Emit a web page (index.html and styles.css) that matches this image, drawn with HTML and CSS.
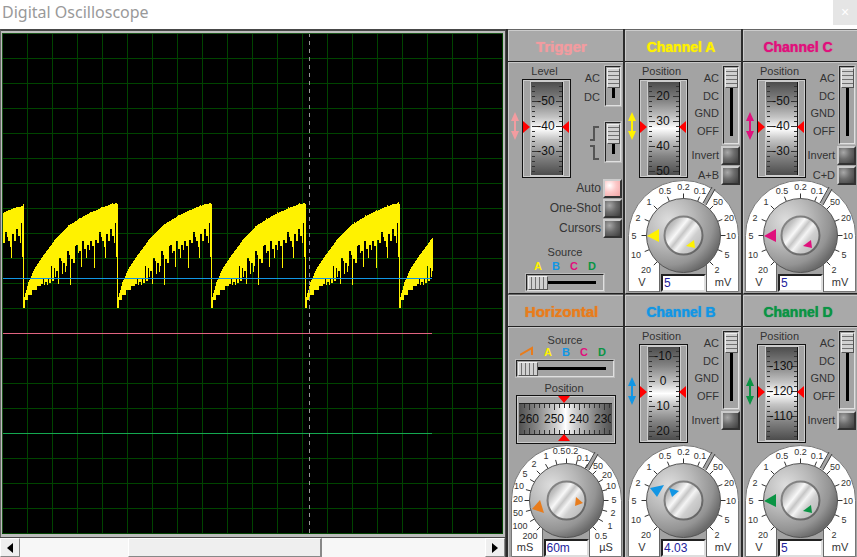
FILE: index.html
```html
<!DOCTYPE html>
<html lang="en">
<head>
<meta charset="utf-8">
<title>Digital Oscilloscope</title>
<link rel="stylesheet" href="styles.css">
</head>
<body>
<header class="titlebar">
  <h1>Digital Oscilloscope</h1>
  <button class="close" type="button" aria-label="Close">×</button>
</header>
<main class="instrument">
  <section class="scope" aria-label="Display">
    <div class="screen"><svg id="traces" class="traces" aria-hidden="true"></svg></div>
    <div class="scrollbar">
      <button type="button" aria-label="Scroll left"><svg width="6" height="10"><path d="M6 0V10L0 5Z"/></svg></button>
      <div class="track"><button class="thumb" type="button" aria-label="Scroll position"></button></div>
      <button type="button" aria-label="Scroll right"><svg width="6" height="10"><path d="M0 0V10L6 5Z"/></svg></button>
    </div>
  </section>

  <section class="panel trigger">
    <h2>Trigger</h2>
    <div class="body">
      <div class="upper">
        <svg class="nudge" width="10" height="28"><path d="M5 0L9 9H6V19H9L5 28L1 19H4V9H1Z"/></svg>
        <div class="position"><span>Level</span><svg class="gauge" data-values="-50 -40 -30" data-at="22"></svg></div>
        <div class="side">
          <div class="coupling short"><ul><li>AC</li><li>DC</li></ul><input type="range" aria-label="Trigger coupling" min="0" max="1" value="0"></div>
          <div class="coupling short"><ul>
            <li><svg class="edge" width="10" height="15"><path d="M0 14H4V1H9"/></svg></li>
            <li><svg class="edge" width="10" height="15"><path d="M0 1H4V14H9"/></svg></li>
          </ul><input type="range" aria-label="Trigger edge" min="0" max="1" value="0"></div>
        </div>
      </div>
      <div class="modes">
        <label class="toggle">Auto<input type="checkbox" checked></label>
        <label class="toggle">One-Shot<input type="checkbox"></label>
        <label class="toggle">Cursors<input type="checkbox"></label>
      </div>
      <div class="source">
        <label for="trigger-source">Source</label>
        <div class="letters"><b class="a">A</b><b class="b">B</b><b class="c">C</b><b class="d">D</b></div>
        <input id="trigger-source" type="range" min="0" max="3" value="0">
      </div>
    </div>
  </section>

  <section class="panel channel-a">
    <h2>Channel A</h2>
    <div class="body">
      <div class="upper">
        <svg class="nudge" width="10" height="28"><path d="M5 0L9 9H6V19H9L5 28L1 19H4V9H1Z"/></svg>
        <div class="position"><span>Position</span><svg class="gauge" data-values="20 30 40 50" data-at="17"></svg></div>
        <div class="side">
          <div class="coupling"><ul><li>AC</li><li>DC</li><li>GND</li><li>OFF</li></ul><input type="range" aria-label="Channel A coupling" min="0" max="3" value="0"></div>
          <label class="toggle">Invert<input type="checkbox"></label>
          <label class="toggle">A+B<input type="checkbox"></label>
        </div>
      </div>
      <div class="dial"><svg data-scale="volts" data-big="19,56 31,49 31,62" data-small="58,66 66,60 67,68"></svg><input type="text" value="5" aria-label="Channel A volts per division"></div>
    </div>
  </section>

  <section class="panel channel-c">
    <h2>Channel C</h2>
    <div class="body">
      <div class="upper">
        <svg class="nudge" width="10" height="28"><path d="M5 0L9 9H6V19H9L5 28L1 19H4V9H1Z"/></svg>
        <div class="position"><span>Position</span><svg class="gauge" data-values="-50 -40 -30" data-at="22"></svg></div>
        <div class="side">
          <div class="coupling"><ul><li>AC</li><li>DC</li><li>GND</li><li>OFF</li></ul><input type="range" aria-label="Channel C coupling" min="0" max="3" value="0"></div>
          <label class="toggle">Invert<input type="checkbox"></label>
          <label class="toggle">C+D<input type="checkbox"></label>
        </div>
      </div>
      <div class="dial"><svg data-scale="volts" data-big="19,56 31,49 31,62" data-small="58,66 66,60 67,68"></svg><input type="text" value="5" aria-label="Channel C volts per division"></div>
    </div>
  </section>

  <section class="panel horizontal">
    <h2>Horizontal</h2>
    <div class="body">
      <div class="source wide">
        <label for="sweep-source">Source</label>
        <div class="letters"><svg width="14" height="10"><path d="M0 9L12 2V9"/></svg><b class="a">A</b><b class="b">B</b><b class="c">C</b><b class="d">D</b></div>
        <input id="sweep-source" type="range" min="0" max="4" value="0">
      </div>
      <div class="sweep"><span>Position</span><svg class="gauge-wide"></svg></div>
      <div class="dial"><svg data-scale="time" data-big="21,64 29,55 33,68" data-small="65,52 72,58 64,61"></svg><input type="text" value="60m" aria-label="Time per division"></div>
    </div>
  </section>

  <section class="panel channel-b">
    <h2>Channel B</h2>
    <div class="body">
      <div class="upper">
        <svg class="nudge" width="10" height="28"><path d="M5 0L9 9H6V19H9L5 28L1 19H4V9H1Z"/></svg>
        <div class="position"><span>Position</span><svg class="gauge" data-values="-10 0 10 20" data-at="12"></svg></div>
        <div class="side">
          <div class="coupling"><ul><li>AC</li><li>DC</li><li>GND</li><li>OFF</li></ul><input type="range" aria-label="Channel B coupling" min="0" max="3" value="0"></div>
          <label class="toggle">Invert<input type="checkbox"></label>
        </div>
      </div>
      <div class="dial"><svg data-scale="volts" data-big="22,43 36,40 29,52" data-small="41,43 51,46 44,52"></svg><input type="text" value="4.03" aria-label="Channel B volts per division"></div>
    </div>
  </section>

  <section class="panel channel-d">
    <h2>Channel D</h2>
    <div class="body">
      <div class="upper">
        <svg class="nudge" width="10" height="28"><path d="M5 0L9 9H6V19H9L5 28L1 19H4V9H1Z"/></svg>
        <div class="position"><span>Position</span><svg class="gauge" data-values="-130 -120 -110" data-at="22"></svg></div>
        <div class="side">
          <div class="coupling"><ul><li>AC</li><li>DC</li><li>GND</li><li>OFF</li></ul><input type="range" aria-label="Channel D coupling" min="0" max="3" value="0"></div>
          <label class="toggle">Invert<input type="checkbox"></label>
        </div>
      </div>
      <div class="dial"><svg data-scale="volts" data-big="19,56 31,49 31,62" data-small="58,66 66,60 67,68"></svg><input type="text" value="5" aria-label="Channel D volts per division"></div>
    </div>
  </section>
</main>

<svg class="defs" width="0" height="0" aria-hidden="true">
  <defs>
    <linearGradient id="drum" x1="0" y1="0" x2="0" y2="1">
      <stop offset="0" stop-color="#4c4c4c"/><stop offset=".2" stop-color="#838383"/><stop offset=".38" stop-color="#c4c4c4"/><stop offset=".5" stop-color="#fff"/><stop offset=".62" stop-color="#c4c4c4"/><stop offset=".8" stop-color="#838383"/><stop offset="1" stop-color="#4c4c4c"/>
    </linearGradient>
    <linearGradient id="drum-wide">
      <stop offset="0" stop-color="#505050"/><stop offset=".2" stop-color="#8a8a8a"/><stop offset=".4" stop-color="#cfcfcf"/><stop offset=".5" stop-color="#fff"/><stop offset=".6" stop-color="#cfcfcf"/><stop offset=".8" stop-color="#8a8a8a"/><stop offset="1" stop-color="#505050"/>
    </linearGradient>
    <radialGradient id="knob" cx=".3" cy=".3" r=".75">
      <stop offset="0" stop-color="#dedede"/><stop offset=".45" stop-color="#b8b8b8"/><stop offset=".8" stop-color="#949494"/><stop offset="1" stop-color="#6a6a6a"/>
    </radialGradient>
    <linearGradient id="cap" x1="0" y1=".1" x2="1" y2=".9">
      <stop offset="0" stop-color="#999"/><stop offset=".2" stop-color="#c4c4c4"/><stop offset=".36" stop-color="#f8f8f8"/><stop offset=".46" stop-color="#c6c6c6"/><stop offset=".56" stop-color="#f4f4f4"/><stop offset=".68" stop-color="#cfcfcf"/><stop offset="1" stop-color="#b4b4b4"/>
    </linearGradient>
    <linearGradient id="rim" x1="0" y1="0" x2="1" y2="1">
      <stop offset="0" stop-color="#8a8a8a"/><stop offset="1" stop-color="#606060"/>
    </linearGradient>
    <clipPath id="drum-clip"><rect x="9" y="3" width="31" height="93"/></clipPath>
    <clipPath id="wide-clip"><rect x="3" y="8" width="92" height="32"/></clipPath>
  </defs>
</svg>
<script src="script.js"></script>
</body>
</html>
```
FILE: styles.css
```css
* { box-sizing: border-box; }

body {
  margin: 0;
  min-height: 100vh;
  display: flex;
  flex-direction: column;
  font: 11px/14px "Liberation Sans", Arial, sans-serif;
  color: #333;
  background: #fff;
}

button, input { margin: 0; padding: 0; border: 0; font: inherit; }
h1, h2, ul { margin: 0; padding: 0; }
svg { display: block; flex: none; }
.defs { position: absolute; }

.titlebar {
  height: 29px;
  display: flex;
  justify-content: space-between;
  align-items: flex-start;
}
.titlebar h1 {
  padding-left: 2px;
  font: 400 16px/25px "Noto Sans", "Open Sans", sans-serif;
  color: #999;
}
.close {
  width: 24px;
  height: 25px;
  background: #e5e5e5;
  color: #fff;
  font-size: 14px;
  line-height: 25px;
}

.instrument {
  flex: 1;
  display: grid;
  grid-template-columns: minmax(0, 1fr) 117px 118px 116px;
  grid-template-rows: 265px minmax(263px, 1fr);
}

/* Display */
.scope {
  grid-row: 1 / 3;
  display: flex;
  flex-direction: column;
  border-top: 2px solid #484848;
  border-right: 1px solid #484848;
  border-left: 1px solid #666;
  background: #bdbdbd;
}
.screen {
  flex: 1;
  margin: 2px 2px 3px 1px;
  overflow: hidden;
  background:
    repeating-linear-gradient(90deg, #004400 0 1px, transparent 1px 25px),
    repeating-linear-gradient(#004400 0 1px, transparent 1px 25px),
    #000;
}
.traces { width: 100%; height: 500px; }
.scrollbar {
  height: 20px;
  display: flex;
  border-top: 1px solid #484848;
  background: #f7f7f7;
  margin-left: -1px;
}
.scrollbar button {
  flex: none;
  width: 20px;
  display: flex;
  align-items: center;
  justify-content: center;
  background: #efefef;
  border: 1px solid;
  border-color: #fff #888 #888 #fff;
}
.track { flex: 1; display: flex; }
.track::before { content: ""; flex: 109; }
.track::after { content: ""; flex: 164; }
.scrollbar .thumb { flex: 193; border-right-width: 2px; }

/* Panels */
.panel {
  display: flex;
  flex-direction: column;
  border-left: 2px solid #2c2c2c;
  background: #a3a3a3;
}
.panel h2 {
  height: 33px;
  padding-right: 4px;
  border-bottom: 1px solid #222;
  border-top: 1px solid #666;
  background: #a9a9a9;
  box-shadow: inset 1px 1px #ccc;
  text-align: center;
  text-shadow: 0 0 1px var(--hue);
  font-size: 14px;
  line-height: 34px;
  color: var(--hue);
}
.trigger h2, .horizontal h2 { font-size: 15px; padding-right: 8px; }
.body {
  flex: 1;
  display: flex;
  flex-direction: column;
  padding-top: 2px;
  border-top: 1px solid #c8c8c8;
  border-left: 1px solid #c8c8c8;
}
.trigger .body, .channel-a .body, .channel-c .body { border-bottom: 1px solid #222; }

.trigger { --hue: #f29ca0; }
.channel-a, .a { --hue: #fff200; }
.channel-b, .b { --hue: #1296e4; }
.channel-c, .c { --hue: #e0107c; }
.channel-d, .d { --hue: #0a9444; }
.horizontal { --hue: #e87c1c; }

.upper { display: flex; min-height: 120px; }
.trigger .upper { min-height: 113px; }
.nudge { fill: var(--hue); margin: 47px 2px 0 1px; }
.position { flex: none; width: 49px; text-align: center; white-space: nowrap; }
.position span, .sweep span { display: block; padding-right: 4px; }
.position span { line-height: 13px; padding-bottom: 1px; }
.gauge { width: 49px; height: 99px; }
.gauge-wide { width: 100px; height: 49px; }
.side { flex: 1; min-width: 0; padding-right: 1px; }

.coupling { display: flex; justify-content: flex-end; height: 80px; }
.coupling ul {
  list-style: none;
  display: flex;
  flex-direction: column;
  justify-content: space-around;
  padding: 4px 3px 5px 0;
  text-align: right;
}
.coupling.short { height: 42px; margin-bottom: 14px; }
.coupling.short ul { padding: 3px 4px 1px 0; }
.edge { fill: none; stroke: #555; stroke-width: 2; }

input[type="range"] {
  appearance: none;
  flex: none;
  width: 18px;
  height: 80px;
  padding: 1px;
  border: 2px solid;
  border-color: #222 #e0e0e0 #e0e0e0 #222;
  outline: 1px solid #bbb;
  outline-offset: -1px;
  writing-mode: vertical-lr;
  background: linear-gradient(#000, #000) 50% 50% / 3px calc(100% - 14px) no-repeat #a3a3a3;
}
.short input[type="range"] { height: 42px; }
input[type="range"]::-webkit-slider-thumb {
  appearance: none;
  width: 13px;
  height: 20px;
  border: 1px solid;
  border-color: #eee #555 #555 #eee;
  background: repeating-linear-gradient(#d0d0d0 0 2px, #707070 2px 3px, #d0d0d0 3px 4px);
}
.source input[type="range"] {
  writing-mode: horizontal-tb;
  width: 80px;
  height: 19px;
  background: linear-gradient(#000, #000) 50% 50% / calc(100% - 14px) 3px no-repeat #a3a3a3;
}
.source.wide input[type="range"] { width: 100px; }
.source input[type="range"]::-webkit-slider-thumb {
  width: 20px;
  height: 14px;
  background: repeating-linear-gradient(90deg, #d0d0d0 0 2px, #707070 2px 3px, #d0d0d0 3px 4px);
}

.toggle {
  display: flex;
  justify-content: flex-end;
  align-items: center;
  gap: 2px;
  height: 20px;
}
.toggle input {
  appearance: none;
  flex: none;
  width: 19px;
  height: 19px;
  border: 2px solid;
  border-color: #ccc #333 #333 #ccc;
  background: radial-gradient(circle at 30% 30%, #a8a8a8, #6c6c6c 45%, #3c3c3c);
}
.toggle input:checked { background: radial-gradient(circle at 30% 30%, #fff, #fcc8c8 45%, #f0a4a4); }
.modes { padding-right: 1px; font-size: 12px; }

.source { display: flex; flex-direction: column; align-items: center; padding: 7px 2px 0 0; }
.source.wide { padding-top: 3px; }
.letters { display: flex; gap: 10px; margin: 1px 0; line-height: 12px; }
.wide .letters { margin: -1px 4px 1px 0; }
.letters b { width: 8px; text-align: center; color: var(--hue); }
.letters svg { fill: none; stroke: var(--hue); stroke-width: 2; }
.sweep { display: flex; flex-direction: column; align-items: center; padding: 3px 0 1px; }

.dial {
  display: grid;
  justify-content: center;
  margin-top: -5px;
}
.horizontal .dial { margin-top: 0; }
.dial svg, .dial input { grid-area: 1 / 1; }
.dial svg { width: 111px; height: 112px; }
.dial input {
  align-self: end;
  margin-left: 33px;
  width: 45px;
  height: 18px;
  padding-left: 1px;
  border: 2px solid;
  border-color: #222 #ddd #ddd #222;
  background: #fff;
  color: #22229c;
  font-size: 12px;
}
```
FILE: script.js
```js
const triangle = (points, fill) => `<polygon points="${points}" fill="${fill}"/>`;

const text = (x, y, size, value, fill = '#333') =>
  `<text x="${x}" y="${y}" font-size="${size}" fill="${fill}" text-anchor="middle" dominant-baseline="central">${value}</text>`;

/* Vertical thumbwheels: 25px between numbers, 5px between ticks. */
document.querySelectorAll('.gauge').forEach(svg => {
  const at = Number(svg.dataset.at);
  let marks = '';
  for (let k = -5; k < 20; k++) {
    const y = at + k * 5 + 0.5;
    const len = k % 5 === 0 ? 6 : 3;
    marks += `<path d="M10 ${y}h${len}M40 ${y}h${-len}" stroke="#333"/>`;
  }
  svg.dataset.values.split(' ').forEach((value, n) => {
    marks += text(24, at + n * 25, 12, value, '#111');
  });
  svg.innerHTML = `
    <rect x=".5" y=".5" width="48" height="98" fill="#a3a3a3" stroke="#111"/>
    <rect x="1.5" y="1.5" width="46" height="96" fill="none" stroke="#ccc"/>
    <rect x="8" y="2" width="34" height="95" fill="#ccc"/>
    <rect x="9" y="3" width="32" height="93" fill="url(#drum)"/>
    <g clip-path="url(#drum-clip)">${marks}</g>
    <path d="M40.500 3V96" stroke="#111"/>
    ${triangle('1,42 8,48 1,54', '#f00')}${triangle('47,42 40,48 47,54', '#f00')}`;
});

document.querySelectorAll('.gauge-wide').forEach(svg => {
  let marks = '';
  for (let k = -1; k < 20; k++) {
    const x = 13 + k * 5 + 0.5;
    const len = k % 5 === 0 ? 6 : 4;
    marks += `<path d="M${x} 9v${len}M${x} 39v${-len}" stroke="#333"/>`;
  }
  [260, 250, 240, 230].forEach((n, i) => { marks += text(13 + i * 25, 24, 12, n, '#111'); });
  svg.innerHTML = `
    <rect x=".5" y=".5" width="99" height="48" fill="#a3a3a3" stroke="#111"/>
    <rect x="1.5" y="1.5" width="97" height="46" fill="none" stroke="#ccc"/>
    <rect x="3" y="8" width="93" height="32" fill="url(#drum-wide)"/>
    <g clip-path="url(#wide-clip)">${marks}</g>
    <path d="M3 8.500H96M3 39.500H96" stroke="#222"/>
    ${triangle('42,1 54,1 48,8', '#f00')}${triangle('42,46 54,46 48,39', '#f00')}`;
});

/* Range dials: label, x, y. */
const scales = {
  volts: {
    step: 22.5,
    marks: [['0.2', 55.5, 7], ['0.5', 37, 11], ['1', 21, 22], ['2', 10, 38], ['5', 6, 56], ['10', 8, 75], ['20', 18, 90],
      ['0.1', 72, 11], ['50', 90, 22], ['20', 101, 38], ['10', 103, 56], ['5', 99, 75], ['2', 89, 90]],
    units: ['V', 'mV']
  },
  time: {
    step: 15,
    marks: [['0.5', 48, 6], ['0.2', 61, 6], ['1', 35, 11], ['2', 23, 19], ['5', 14, 29], ['10', 8, 41], ['20', 7, 54],
      ['50', 7, 68], ['100', 9, 81], ['200', 19, 91], ['0.1', 72, 13], ['50', 87, 21], ['20', 96, 30], ['10', 100, 41],
      ['5', 103, 55], ['2', 102, 68], ['1', 99, 81], ['0.5', 90, 91]],
    units: ['mS', 'µS']
  }
};

document.querySelectorAll('.dial svg').forEach(svg => {
  const scale = scales[svg.dataset.scale];
  let ticks = '';
  for (let a = -45; a <= 225; a += scale.step) {
    const c = Math.cos(a * Math.PI / 180);
    const s = -Math.sin(a * Math.PI / 180);
    ticks += `<path d="M${55.5 + 36 * c} ${55.5 + 36 * s}L${55.5 + 42 * c} ${55.5 + 42 * s}" stroke="#333"/>`;
  }
  svg.innerHTML = `
    <path d="M.5 111.500V55.500A55 55 0 0 1 110.500 55.500V111.500Z" fill="#fff" stroke="#777"/>
    <rect x="31" y="80" width="48" height="32" fill="#a3a3a3"/>
    <path d="M31.500 83V112M78.500 83V112" stroke="#666"/>
    <path d="M75 23L84 8L87 10L78 25Z" fill="#a3a3a3"/>
    <path d="M75 23L84 7M78 25L87 9" stroke="#444"/>
    ${ticks}
    ${scale.marks.map(([label, x, y]) => text(x, y, 9, label)).join('')}
    ${text(14, 102, 11, scale.units[0])}${text(95, 102, 11, scale.units[1])}
    <circle cx="55.500" cy="55.500" r="37" fill="url(#knob)" stroke="#555"/>
    <circle cx="55.500" cy="55.500" r="19" fill="url(#cap)" stroke="url(#rim)" stroke-width="2"/>
    ${triangle(svg.dataset.big, 'var(--hue)')}${triangle(svg.dataset.small, 'var(--hue)')}`;
});

/* Channel A sawtooth: envelope and ripple over one 94px period, as [offset, y]. */
const upperEdge = [[0, 272], [1, 264], [5, 249], [11, 236], [18, 225], [24, 217], [32, 206], [38, 200], [46, 192],
  [54, 187], [62, 182], [71, 178], [80, 174], [88, 171], [94, 170]];
const lowerEdge = [[0, 275], [2, 267], [5, 262], [9, 257], [14, 253], [18, 251], [20, 245], [21, 252], [22, 249], [24, 252],
  [25, 246], [26, 250], [28, 233], [29, 248], [31, 235], [32, 244], [33, 238], [35, 251], [36, 225], [38, 228],
  [39, 241], [40, 230], [42, 239], [43, 233], [44, 218], [46, 222], [47, 252], [48, 226], [50, 230], [52, 213],
  [53, 212], [55, 220], [56, 218], [58, 234], [59, 208], [61, 216], [63, 225], [64, 212], [66, 217], [67, 208],
  [69, 213], [71, 235], [72, 207], [74, 210], [76, 199], [78, 204], [79, 208], [81, 214], [82, 225], [83, 201],
  [85, 208], [87, 196], [89, 203], [91, 210], [92, 190], [93, 224], [94, 224]];

const topAt = x => {
  const i = Math.max(1, upperEdge.findIndex(p => p[0] >= x));
  const [x0, y0] = upperEdge[i - 1];
  const [x1, y1] = upperEdge[i];
  return Math.round(y0 + (y1 - y0) * (x - x0) / (x1 - x0));
};
const bottomAt = x => lowerEdge.filter(p => p[0] <= x).pop()[1];

let bars = '';
for (let x = 0; x < 431; x++) {
  const phase = (x + 73) % 94;
  const jitter = phase > 40 && (x * 7) % 11 === 0 ? 1 : 0;
  const start = topAt(phase) - jitter + (x < 21 ? 3 : 0);
  bars += phase === 0 ? `M${x + 0.5} 171V275` : `M${x + 0.5} ${start}V${bottomAt(phase)}`;
}
document.getElementById('traces').innerHTML = `
  <path d="${bars}" stroke="#fff200"/>
  <path d="M0 245.500H430" stroke="#1296e4"/>
  <path d="M0 300.500H430" stroke="#e06480"/>
  <path d="M0 400.500H430" stroke="#14a850"/>
  <path d="M307.500 0V500" stroke="#999" stroke-dasharray="4 4"/>
  <path d="M.5 0V500M0 .5H501" stroke="#1c541c"/>`;
```
